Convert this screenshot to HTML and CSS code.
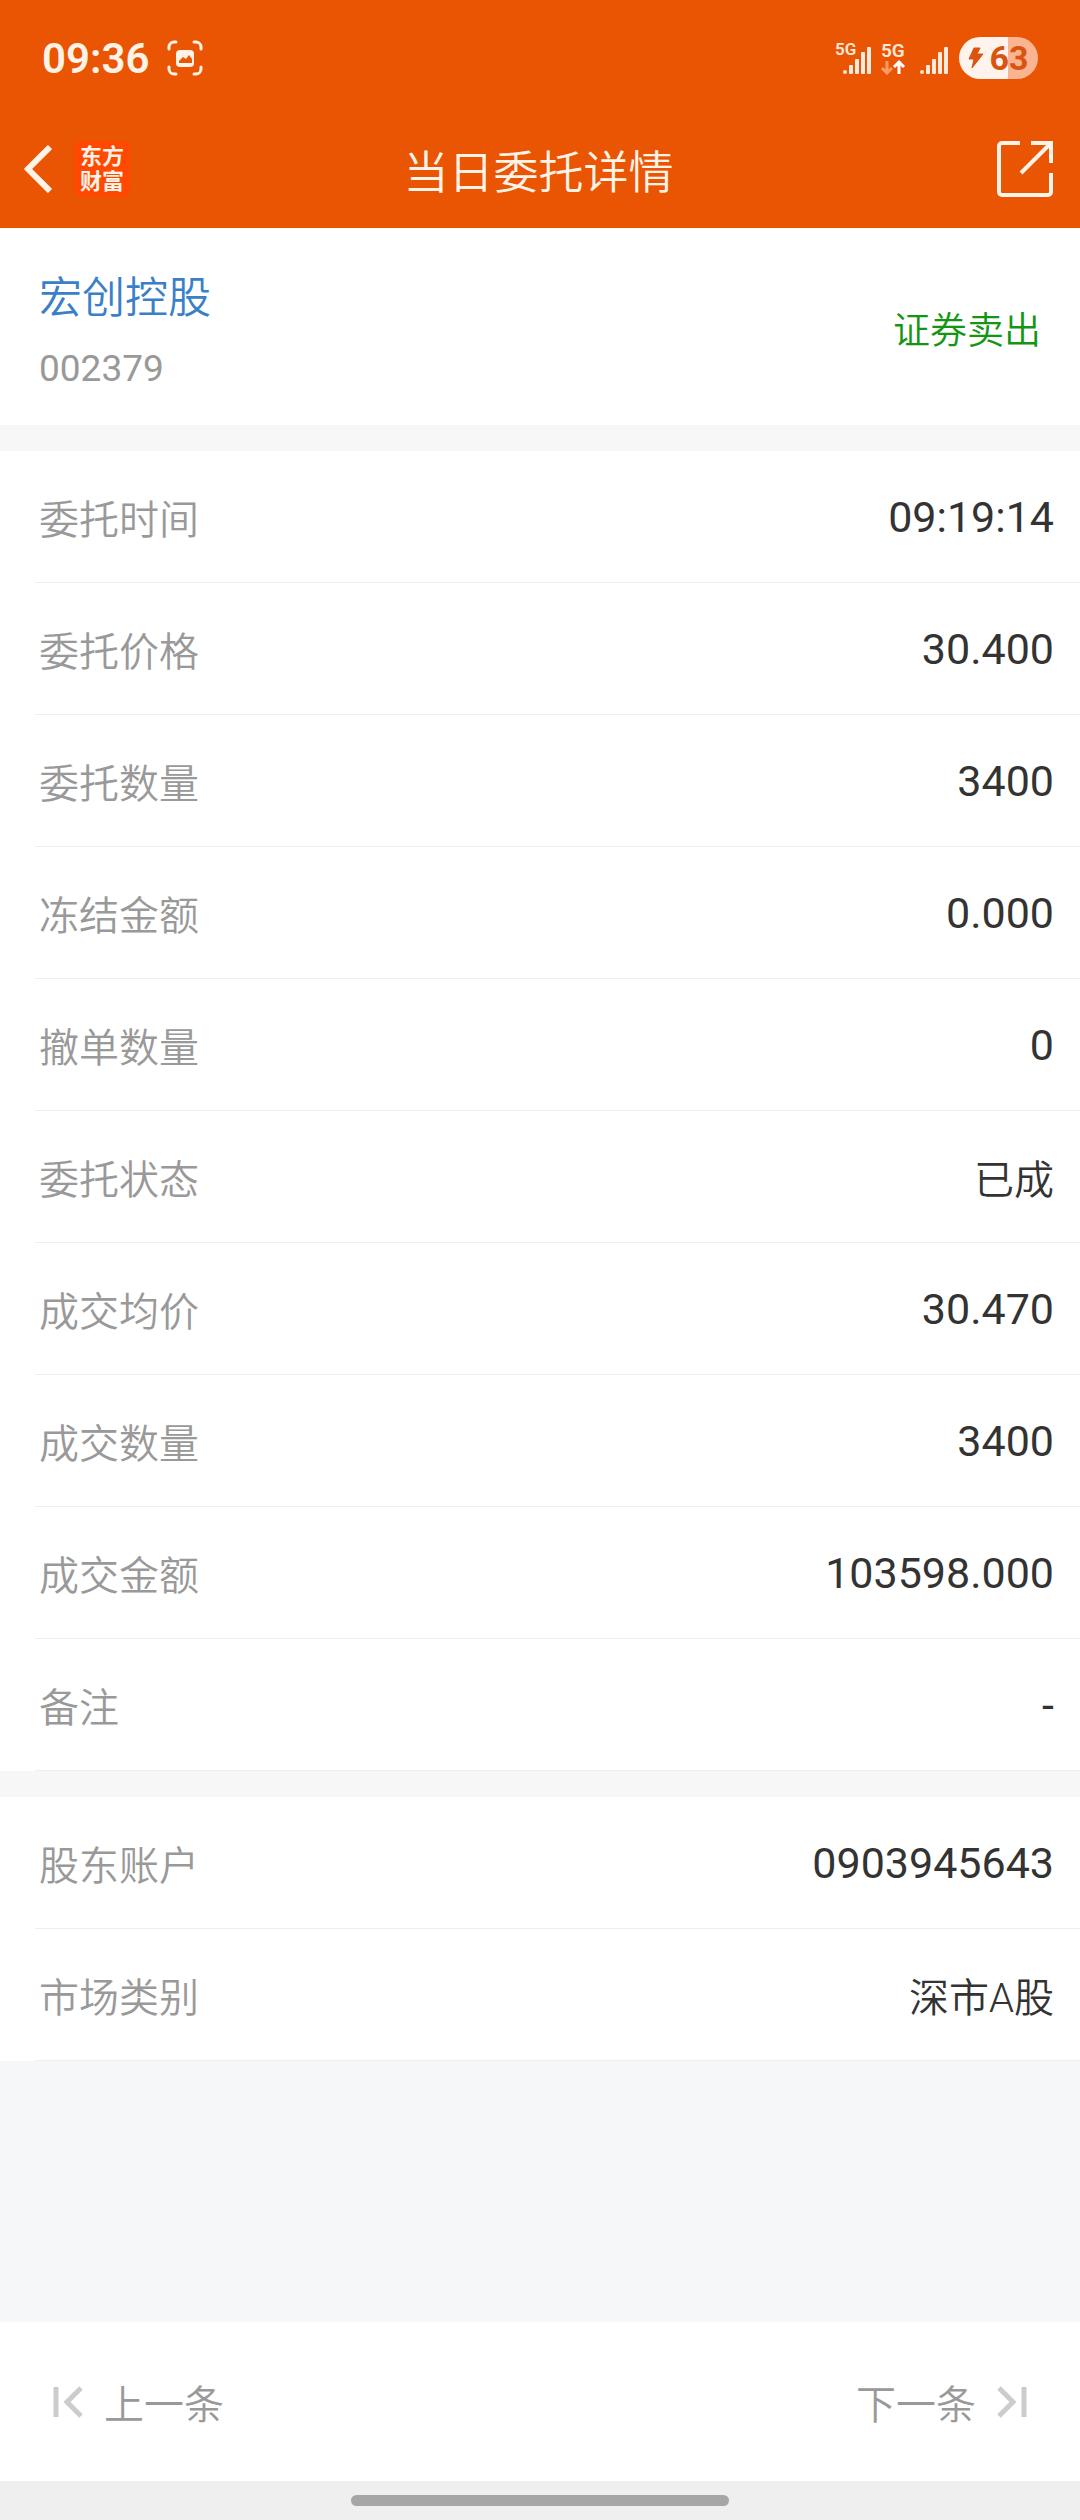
FILE: index.html
```
<!DOCTYPE html>
<html lang="zh-CN">
<head>
  <title>当日委托详情</title>
  <meta charset="utf-8">
  <meta name="viewport" content="width=device-width, initial-scale=1">
  <link rel="stylesheet" href="styles.css">
</head>
<body>
  <header class="header">
    <!-- Status bar -->
    <div class="status-bar">
      <div class="status-left">
        <span class="clock">09:36</span>
        <svg class="capture" width="36" height="36" viewBox="0 0 36 36">
          <path d="M2 9V7a5 5 0 0 1 5-5h2M27 2h2a5 5 0 0 1 5 5v2M34 27v2a5 5 0 0 1-5 5h-2M9 34H7a5 5 0 0 1-5-5v-2" fill="none" stroke="#fff3e8" stroke-width="3" stroke-linecap="round"/>
          <rect x="9" y="10" width="18" height="17" rx="4" fill="#fff3e8"/>
          <path d="M12 21l4-4 3 2 3-4 3 4v4H12z" fill="#e95502"/>
        </svg>
      </div>
      <div class="status-right">
        <svg class="signal" width="38" height="36" viewBox="0 0 38 36">
          <text class="net" x="1" y="15" font-size="17">5G</text>
          <g fill="#ffe9dc">
            <circle cx="11" cy="32" r="2"/>
            <rect x="15" y="25" width="4" height="9" rx="1"/>
            <rect x="21" y="19" width="4" height="15" rx="1"/>
            <rect x="27" y="12" width="4" height="22" rx="1"/>
            <rect x="33" y="7" width="4" height="27" rx="1"/>
          </g>
        </svg>
        <svg class="data" width="28" height="36" viewBox="0 0 28 36">
          <text class="net" x="1" y="17" font-size="19">5G</text>
          <path d="M7 21v12M2 28l5 5 5-5" fill="none" stroke="#ff9c66" stroke-width="3"/>
          <path d="M19 34V21M14 27l5-5 5 5" fill="none" stroke="#fff" stroke-width="3"/>
        </svg>
        <svg class="signal-2" width="28" height="36" viewBox="0 0 28 36">
          <g fill="#ffe9dc">
            <circle cx="2" cy="32" r="2"/>
            <rect x="6" y="25" width="4" height="9" rx="1"/>
            <rect x="12" y="19" width="4" height="15" rx="1"/>
            <rect x="18" y="12" width="4" height="22" rx="1"/>
            <rect x="24" y="7" width="4" height="27" rx="1"/>
          </g>
        </svg>
        <div class="battery">
          <svg width="16" height="22" viewBox="0 0 16 22">
            <path d="M6 1h6l-3 6h6L4 21l2-9H1z" fill="#d9540f" stroke="#d9540f" stroke-linejoin="round"/>
          </svg>
          <span>63</span>
        </div>
      </div>
    </div>

    <!-- Title bar -->
    <div class="title-bar">
      <div class="title-side">
        <button class="icon-btn" type="button" aria-label="返回">
          <svg width="28" height="48" viewBox="0 0 28 48">
            <path d="M26 2L4 24l22 22" fill="none" stroke="#fff3e8" stroke-width="6"/>
          </svg>
        </button>
        <div class="logo">东方<br>财富</div>
      </div>
      <h1 class="title">当日委托详情</h1>
      <div class="title-side title-end">
        <button class="icon-btn" type="button" aria-label="分享">
          <svg width="56" height="56" viewBox="0 0 56 56">
            <path d="M23 2H5a3 3 0 0 0-3 3v46a3 3 0 0 0 3 3h46a3 3 0 0 0 3-3V32M34 2h20v20M53 3L24 32" fill="none" stroke="#fff3e8" stroke-width="4"/>
          </svg>
        </button>
      </div>
    </div>
  </header>

  <main class="main">
    <section class="stock">
      <div>
        <a class="stock-name" href="#">宏创控股</a>
        <div class="stock-code">002379</div>
      </div>
      <div class="side">证券卖出</div>
    </section>

    <dl class="list">
      <div class="row"><dt>委托时间</dt><dd>09:19:14</dd></div>
      <div class="row"><dt>委托价格</dt><dd>30.400</dd></div>
      <div class="row"><dt>委托数量</dt><dd>3400</dd></div>
      <div class="row"><dt>冻结金额</dt><dd>0.000</dd></div>
      <div class="row"><dt>撤单数量</dt><dd>0</dd></div>
      <div class="row"><dt>委托状态</dt><dd class="zh">已成</dd></div>
      <div class="row"><dt>成交均价</dt><dd>30.470</dd></div>
      <div class="row"><dt>成交数量</dt><dd>3400</dd></div>
      <div class="row"><dt>成交金额</dt><dd>103598.000</dd></div>
      <div class="row"><dt>备注</dt><dd>-</dd></div>
    </dl>

    <dl class="list">
      <div class="row"><dt>股东账户</dt><dd>0903945643</dd></div>
      <div class="row"><dt>市场类别</dt><dd class="zh">深市A股</dd></div>
    </dl>
  </main>

  <!-- Previous / next order -->
  <nav class="pager">
    <button class="pager-btn" type="button">
      <svg width="30" height="32" viewBox="0 0 30 32">
        <path d="M3 1v30M28 2L14 16l14 14" fill="none" stroke="#ccc" stroke-width="5"/>
      </svg>
      上一条
    </button>
    <button class="pager-btn" type="button">
      下一条
      <svg width="30" height="32" viewBox="0 0 30 32">
        <path d="M27 1v30M2 2l14 14L2 30" fill="none" stroke="#ccc" stroke-width="5"/>
      </svg>
    </button>
  </nav>
  <div class="home-bar"><div class="home-pill"></div></div>
</body>
</html>
```
FILE: styles.css
```
* {
  box-sizing: border-box;
}

body {
  margin: 0;
  min-height: 100vh;
  display: flex;
  flex-direction: column;
  background: #f6f7f9;
  color: #333;
  font-family: Roboto, 'Noto Sans CJK SC', sans-serif;
  font-size: 40px;
}

button {
  padding: 0;
  border: 0;
  background: none;
  color: inherit;
  font: inherit;
  cursor: pointer;
}

svg {
  display: block;
  flex: none;
}

/* Header */
.header {
  padding-bottom: 6px;
  background: #e95502;
  color: #fff3e8;
}

.status-bar {
  height: 116px;
  padding: 0 42px;
  display: flex;
  justify-content: space-between;
  align-items: center;
}

.status-left,
.status-right {
  display: flex;
  align-items: center;
}

.status-left {
  gap: 18px;
}

.clock {
  font-size: 42px;
  font-weight: 600;
}

.signal {
  margin-right: 8px;
}

.data {
  margin-right: 12px;
}

.signal-2 {
  margin-right: 11px;
}

.net {
  font-weight: 600;
  fill: #ffe9dc;
}

.battery {
  width: 79px;
  height: 42px;
  display: flex;
  justify-content: center;
  align-items: center;
  gap: 5px;
  border-radius: 21px;
  background: linear-gradient(90deg, #fff3ee 62%, #fab492 62%);
  color: #d9540f;
  font-size: 34px;
  font-weight: 700;
}

.title-bar {
  height: 106px;
  padding: 0 27px 0 24px;
  display: flex;
  align-items: center;
}

.title-side {
  flex: 1;
  display: flex;
  align-items: center;
  gap: 22px;
}

.title-end {
  justify-content: flex-end;
}

.logo {
  width: 56px;
  height: 56px;
  padding-top: 3px;
  border-radius: 8px;
  background: #ff4800;
  font-size: 22px;
  font-weight: 700;
  line-height: 25px;
  text-align: center;
}

.title {
  margin: 0;
  font-size: 45px;
  font-weight: 350;
}

/* Stock summary */
.main {
  flex: 1;
}

.stock {
  padding: 29px 39px 26px;
  display: flex;
  justify-content: space-between;
  align-items: center;
  background: #fff;
}

.stock-name {
  display: block;
  color: #3a7fc8;
  font-size: 43px;
  font-weight: 350;
  line-height: 82px;
  text-decoration: none;
}

.stock-code {
  color: #999;
  font-size: 37px;
  line-height: 60px;
}

.side {
  color: #149614;
  font-size: 37px;
  font-weight: 350;
}

/* Detail rows */
.list {
  margin: 0;
  border-top: 26px solid #f7f7f7;
  background: #fff;
}

.row {
  height: 132px;
  margin-left: 35px;
  padding: 0 26px 0 4px;
  display: flex;
  justify-content: space-between;
  align-items: center;
  border-bottom: 1px solid #eee;
}

.row dt {
  color: #999;
  font-weight: 350;
}

.row dd {
  margin: 0;
  font-size: 43px;
}

.row .zh {
  font-size: 40px;
  font-weight: 350;
}

/* Footer */
.pager {
  height: 159px;
  padding: 0 53px;
  display: flex;
  justify-content: space-between;
  align-items: center;
  background: #fff;
  color: #999;
}

.pager-btn {
  display: flex;
  align-items: center;
  gap: 21px;
  font-weight: 350;
}

.home-bar {
  height: 39px;
  padding-top: 14px;
  background: #efefef;
}

.home-pill {
  width: 35%;
  height: 11px;
  margin: 0 auto;
  border-radius: 6px;
  background: #a6a6a6;
}
```
